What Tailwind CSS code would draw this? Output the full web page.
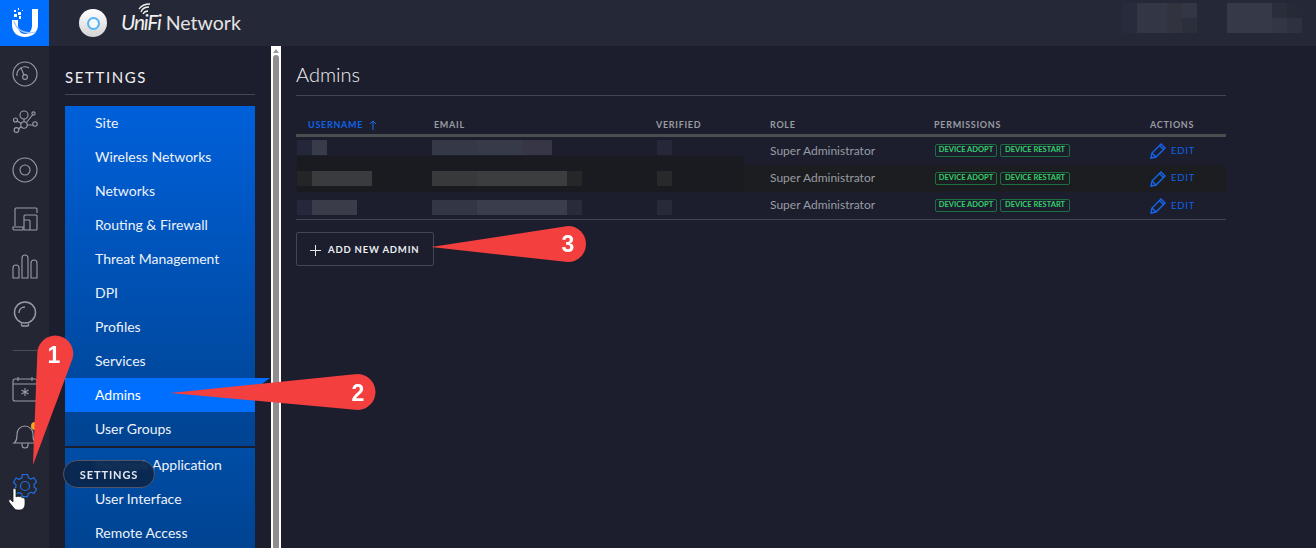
<!DOCTYPE html>
<html lang="en">
<head>
    <meta charset="UTF-8">
    <title>UniFi Network - Admins</title>
    <script src="https://cdn.jsdelivr.net/npm/@tailwindcss/browser@4"></script>
</head>
<body class="relative w-[1316px] h-[548px] overflow-hidden bg-[#1c1e2e] font-['Lato',sans-serif] text-white">

    <!-- top bar -->
    <header class="flex h-[46px] bg-[#252836]">
        <div class="w-[49px] h-[46px] bg-[#006fff] flex items-center justify-center">
            <svg width="28" height="30" viewBox="0 0 28 30" fill="none">
                <path d="M21 1h6v16c0 7-5 12-13 12S1 24 1 17v-5h6v5c0 6 3 9 7 9s7-3 7-9z" fill="#fff"/>
                <path d="M3 13c2 8 9 14 22 11" stroke="#9cc6ff" stroke-width="1.2"/>
                <path d="M3 2h2v2H3zM7 0h1v2H7zM7 4h3v3H7zM3 6h3v3H3zM8 8h2v3H8zM11 2h1v1h-1z" fill="#fff"/>
            </svg>
        </div>
        <div class="flex items-center pl-[30px]">
            <div class="w-[28px] h-[28px] rounded-full bg-linear-to-b from-white to-[#d4d4d4] flex items-center justify-center">
                <div class="w-[13px] h-[13px] rounded-full border-2 border-[#55b4f5] bg-[#f4f8fb]"></div>
            </div>
            <div class="relative ml-[14px] -mt-[3px] flex items-baseline">
                <span class="italic text-[21px] tracking-[-1.200px] text-[#f0f0f0]">UniFi</span>
                <span class="ml-[5px] text-[19.500px] text-[#e4e4e4]">Network</span>
                <svg class="absolute left-[15px] top-[-3px]" width="22" height="14" viewBox="0 0 22 14" fill="none" stroke="#f0f0f0" stroke-width="1.3">
                    <path d="M5 9c1-3 4-5 8-5M7 11c1-2 3-3 5-3M3 6c2-3 6-5 11-5"/>
                </svg>
            </div>
        </div>
        <div class="ml-auto flex pt-[3px] pr-[14px]">
            <div class="flex h-[30px] w-[75px]">
                <div class="w-[15px] h-[30px] bg-[#272b3c]"></div>
                <div class="w-[30px] h-[30px] bg-[#333644]"></div>
                <div class="w-[15px] h-[30px] bg-[#31343f]"></div>
                <div class="flex flex-col w-[15px]">
                    <div class="h-[15px] bg-[#333644]"></div>
                    <div class="h-[15px] bg-[#2b2e3b]"></div>
                </div>
            </div>
            <div class="flex h-[30px] w-[75px] ml-[30px]">
                <div class="w-[45px] h-[30px] bg-[#363947]"></div>
                <div class="flex flex-col w-[15px]">
                    <div class="h-[15px] bg-[#2a2d3a]"></div>
                    <div class="h-[15px] bg-[#333644]"></div>
                </div>
                <div class="flex flex-col w-[15px]">
                    <div class="h-[15px] bg-[#262936]"></div>
                    <div class="h-[15px] bg-[#2e3140]"></div>
                </div>
            </div>
        </div>
    </header>

    <div class="flex h-[502px]">
        <!-- icon rail -->
        <nav class="w-[49px] shrink-0 bg-[#242733] flex flex-col items-center text-[#9a9da5]">
            <div class="flex flex-col gap-[22px] pt-[15px]">
                <svg width="26" height="26" viewBox="0 0 26 26" fill="none" stroke="currentColor" stroke-width="1.1">
                    <circle cx="13" cy="13" r="12"/>
                    <circle cx="13" cy="16" r="2.4"/>
                    <path d="M12 14 9 7M5 15a8 8 0 0 1 12-8"/>
                </svg>
                <svg width="26" height="26" viewBox="0 0 26 26" fill="none" stroke="currentColor" stroke-width="1.1">
                    <circle cx="12" cy="6" r="4"/>
                    <circle cx="12" cy="16" r="3.2"/>
                    <circle cx="3.5" cy="11" r="2"/>
                    <circle cx="4.5" cy="21" r="2.4"/>
                    <circle cx="23" cy="15" r="2.2"/>
                    <circle cx="21.5" cy="4.5" r="1.6"/>
                    <path d="M12 10v3M5 12l4.500 2.500M6.500 20l3-2.500M15 16h6M14.500 13.500l6-7.500"/>
                </svg>
                <svg width="26" height="26" viewBox="0 0 26 26" fill="none" stroke="currentColor" stroke-width="1.1">
                    <circle cx="13" cy="13" r="12"/>
                    <circle cx="13" cy="13" r="5"/>
                </svg>
                <svg width="26" height="26" viewBox="0 0 26 26" fill="none" stroke="currentColor" stroke-width="1.1">
                    <path d="M3 21V4a1 1 0 0 1 1-1h20a1 1 0 0 1 1 1v4"/>
                    <path d="M1 22h10v3H2a1 1 0 0 1-1-1z"/>
                    <rect x="12" y="10" width="13" height="15" rx="1"/>
                    <path d="M12 15h5a1 1 0 0 1 1 1v9"/>
                </svg>
                <svg width="26" height="26" viewBox="0 0 26 26" fill="none" stroke="currentColor" stroke-width="1.1">
                    <path d="M1 25V15a3 3 0 0 1 6 0v10z"/>
                    <path d="M10 25V5a3 3 0 0 1 6 0v20z"/>
                    <path d="M19 25V10a3 3 0 0 1 6 0v15z"/>
                </svg>
                <svg width="26" height="26" viewBox="0 0 26 26" fill="none" stroke="currentColor" stroke-width="1.4">
                    <circle cx="13" cy="11.500" r="10.500"/>
                    <path d="M7 12c0-4 3-6 6-6M9.500 22.500v1.500a1 1 0 0 0 1 1h5a1 1 0 0 0 1-1v-1.500"/>
                </svg>
            </div>
            <div class="mt-[23px] w-[24px] h-px bg-[#4a4d58]"></div>
            <div class="mt-[25px] flex flex-col items-center">
                <svg width="26" height="26" viewBox="0 0 26 26" fill="none" stroke="currentColor" stroke-width="1.1">
                    <rect x="1" y="3" width="24" height="22" rx="2"/>
                    <path d="M1 8h24M6 1v4M20 1v4"/>
                    <path d="M13 12v8M9.500 14l7 4M16.500 14l-7 4"/>
                </svg>
                <div class="relative mt-[21px] w-[26px] h-[26px]">
                    <svg width="26" height="26" viewBox="0 0 26 26" fill="none" stroke="currentColor" stroke-width="1.1">
                        <path d="M2 20c3-2 3-5 3-9a8 8 0 0 1 16 0c0 4 0 7 3 9zM10 20v2a3 3 0 0 0 6 0v-2"/>
                    </svg>
                    <div class="absolute right-[-1px] top-[-1px] w-[8px] h-[8px] rounded-full bg-[#f5a623]"></div>
                </div>
                <svg class="mt-[24px] text-[#1e6fe0]" width="26" height="26" viewBox="0 0 26 26" fill="none" stroke="currentColor" stroke-width="1.2">
                    <circle cx="13" cy="13" r="4.500"/>
                    <path d="M10.500 1.500h5l.8 3.200 2.700 1.300 3-1.300 2.500 4.300-2.400 2.200v2.700l2.400 2.200-2.500 4.300-3-1.100-2.700 1.300-.8 3.100h-5l-.8-3.100L7 19.600l-3 1.100-2.500-4.300 2.400-2.200v-2.700L1.500 9.300 4 5l3 1.300 2.700-1.300z"/>
                </svg>
            </div>
        </nav>

        <!-- settings sidebar -->
        <aside class="w-[222px] shrink-0 pl-[16px]">
            <h2 class="h-[49px] pt-[22px] text-[15px] leading-[18px] tracking-[1.6px] text-[#f0f0f0] w-[190px] border-b border-[#43465a]">SETTINGS</h2>
            <div class="mt-[11px] w-[190px] text-[14px] text-[#eef2f8]">
                <ul class="bg-linear-to-b from-[#0060da] to-[#004391]">
                    <li class="h-[34px] pl-[30px] leading-[34px]">Site</li>
                    <li class="h-[34px] pl-[30px] leading-[34px]">Wireless Networks</li>
                    <li class="h-[34px] pl-[30px] leading-[34px]">Networks</li>
                    <li class="h-[34px] pl-[30px] leading-[34px]">Routing &amp; Firewall</li>
                    <li class="h-[34px] pl-[30px] leading-[34px]">Threat Management</li>
                    <li class="h-[34px] pl-[30px] leading-[34px]">DPI</li>
                    <li class="h-[34px] pl-[30px] leading-[34px]">Profiles</li>
                    <li class="h-[34px] pl-[30px] leading-[34px]">Services</li>
                    <li class="h-[34px] pl-[30px] leading-[34px] bg-[#006fff] text-white">Admins</li>
                    <li class="h-[34px] pl-[30px] leading-[34px]">User Groups</li>
                </ul>
                <ul class="mt-[2px] bg-linear-to-b from-[#004da6] to-[#004391]">
                    <li class="h-[34px] pl-[30px] leading-[34px]">Network Application</li>
                    <li class="h-[34px] pl-[30px] leading-[34px]">User Interface</li>
                    <li class="h-[34px] pl-[30px] leading-[34px]">Remote Access</li>
                </ul>
            </div>
        </aside>

        <!-- scrollbar -->
        <div class="w-[10px] shrink-0 bg-white px-[2px] pt-[3px]">
            <div class="w-0 h-0 mx-auto border-x-[3px] border-x-transparent border-b-[4px] border-b-[#9a9a9a]"></div>
            <div class="mt-[2px] h-[500px] bg-[#8f8d8d] rounded-t-[3px]"></div>
        </div>

        <!-- admins panel -->
        <main class="w-[945px] pl-[15px] pr-[0px]">
            <h1 class="h-[50px] pt-[16px] text-[20px] leading-[24px] font-light text-[#f2f2f2] border-b border-[#43465a]">Admins</h1>
            <div class="relative mt-[20px]">
                <div class="grid grid-cols-[138px_222px_114px_164px_216px_76px] h-[18px] items-center text-[9px] font-bold tracking-[0.7px] text-[#989ba2] border-b-[3px] border-[#494e50] box-content">
                    <div class="pl-[12px] text-[#0f62e6] flex items-center">USERNAME
                        <svg class="ml-[6px]" width="8" height="10" viewBox="0 0 8 10" fill="none" stroke="#1a6cf0"><path d="M4 10V1M1 4l3-3 3 3"/></svg>
                    </div>
                    <div>EMAIL</div>
                    <div>VERIFIED</div>
                    <div>ROLE</div>
                    <div>PERMISSIONS</div>
                    <div>ACTIONS</div>
                </div>

                <!-- row 1 -->
                <div class="relative grid grid-cols-[138px_222px_114px_164px_216px_76px] h-[28px] items-center text-[12px] text-[#999ca3]">
                    <div class="flex pl-[1px] -mt-[7px]">
                        <div class="w-[15px] h-[15px] bg-[#24263a]"></div>
                        <div class="w-[15px] h-[15px] bg-[#383b49]"></div>
                    </div>
                    <div class="flex -ml-[2px] -mt-[7px]">
                        <div class="w-[45px] h-[15px] bg-[#353846]"></div>
                        <div class="w-[45px] h-[15px] bg-[#373a49]"></div>
                        <div class="w-[30px] h-[15px] bg-[#363646]"></div>
                    </div>
                    <div class="pl-[1px] -mt-[7px]"><div class="w-[15px] h-[15px] bg-[#26283a]"></div></div>
                    <div>Super Administrator</div>
                    <div class="flex gap-[3px] pl-[1px] -mt-[2px]">
                        <span class="h-[13px] w-[62px] rounded-[2px] border border-[#1d6f41] text-center text-[7.500px] leading-[10px] font-bold text-[#35d06c]">DEVICE ADOPT</span>
                        <span class="h-[13px] w-[70px] rounded-[2px] border border-[#1d6f41] text-center text-[7.500px] leading-[10px] font-bold text-[#35d06c]">DEVICE RESTART</span>
                    </div>
                    <div class="flex items-center">
                        <svg width="16" height="16" viewBox="0 0 16 16" fill="none" stroke="#1466ee" stroke-width="1.4"><path d="M1 15l1-5L11 1l4 4-9 9zM2 10l4 4M9.500 2.500l4 4"/></svg>
                        <span class="ml-[5px] text-[9.500px] tracking-[0.8px] text-[#0f62e6]">EDIT</span>
                    </div>
                </div>

                <!-- row 2 -->
                <div class="relative grid grid-cols-[138px_222px_114px_164px_216px_76px] h-[27px] items-center text-[12px] text-[#999ca3] bg-[#1c1d20]">
                    <div class="absolute left-[1px] top-[-9px] w-[447px] h-[36px] bg-[#1a1b21]"></div>
                    <div class="relative flex pl-[1px]">
                        <div class="w-[15px] h-[15px] bg-[#242527]"></div>
                        <div class="w-[60px] h-[15px] bg-[#3a3b3e]"></div>
                    </div>
                    <div class="relative flex -ml-[2px]">
                        <div class="w-[45px] h-[15px] bg-[#38393b]"></div>
                        <div class="w-[90px] h-[15px] bg-[#3b3d3f]"></div>
                        <div class="w-[15px] h-[15px] bg-[#262729]"></div>
                    </div>
                    <div class="relative pl-[1px]"><div class="w-[15px] h-[15px] bg-[#28292b]"></div></div>
                    <div class="-mt-[2px]">Super Administrator</div>
                    <div class="flex gap-[3px] pl-[1px]">
                        <span class="h-[13px] w-[62px] rounded-[2px] border border-[#1d6f41] text-center text-[7.500px] leading-[10px] font-bold text-[#35d06c]">DEVICE ADOPT</span>
                        <span class="h-[13px] w-[70px] rounded-[2px] border border-[#1d6f41] text-center text-[7.500px] leading-[10px] font-bold text-[#35d06c]">DEVICE RESTART</span>
                    </div>
                    <div class="flex items-center">
                        <svg width="16" height="16" viewBox="0 0 16 16" fill="none" stroke="#1466ee" stroke-width="1.4"><path d="M1 15l1-5L11 1l4 4-9 9zM2 10l4 4M9.500 2.500l4 4"/></svg>
                        <span class="ml-[5px] text-[9.500px] tracking-[0.8px] text-[#0f62e6]">EDIT</span>
                    </div>
                </div>

                <!-- row 3 -->
                <div class="grid grid-cols-[138px_222px_114px_164px_216px_76px] h-[28px] items-center text-[12px] text-[#999ca3] border-b border-[#43465a]">
                    <div class="flex pl-[1px] mt-[3px]">
                        <div class="w-[15px] h-[15px] bg-[#25273a]"></div>
                        <div class="w-[45px] h-[15px] bg-[#3a3c4a]"></div>
                    </div>
                    <div class="flex -ml-[2px] mt-[3px]">
                        <div class="w-[45px] h-[15px] bg-[#333745]"></div>
                        <div class="w-[90px] h-[15px] bg-[#3a3d4b]"></div>
                        <div class="w-[15px] h-[15px] bg-[#292b3b]"></div>
                    </div>
                    <div class="pl-[1px] mt-[3px]"><div class="w-[15px] h-[15px] bg-[#282a39]"></div></div>
                    <div class="-mt-[2px]">Super Administrator</div>
                    <div class="flex gap-[3px] pl-[1px]">
                        <span class="h-[13px] w-[62px] rounded-[2px] border border-[#1d6f41] text-center text-[7.500px] leading-[10px] font-bold text-[#35d06c]">DEVICE ADOPT</span>
                        <span class="h-[13px] w-[70px] rounded-[2px] border border-[#1d6f41] text-center text-[7.500px] leading-[10px] font-bold text-[#35d06c]">DEVICE RESTART</span>
                    </div>
                    <div class="flex items-center mt-[1px]">
                        <svg width="16" height="16" viewBox="0 0 16 16" fill="none" stroke="#1466ee" stroke-width="1.4"><path d="M1 15l1-5L11 1l4 4-9 9zM2 10l4 4M9.500 2.500l4 4"/></svg>
                        <span class="ml-[5px] text-[9.500px] tracking-[0.8px] text-[#0f62e6]">EDIT</span>
                    </div>
                </div>

                <button class="mt-[12px] flex items-center w-[138px] h-[34px] pl-[13px] pt-[2px] rounded-[2px] border border-[#43465a] text-[9.500px] font-bold tracking-[0.8px] text-[#eceef2]">
                    <svg class="mr-[7px]" width="11" height="11" viewBox="0 0 11 11" stroke="#e8e8e8" stroke-width="1"><path d="M5.500 0v11M0 5.500h11"/></svg>
                    ADD NEW ADMIN
                </button>
            </div>
        </main>
    </div>

    <!-- tooltip -->
    <div class="absolute left-[63px] top-[460px] w-[92px] h-[28px] rounded-full border border-[#50566a] bg-[#0a2549]/90 backdrop-blur-[2px] text-center text-[11px] leading-[27px] font-bold tracking-[0.9px] text-[#e4e8ee]">SETTINGS</div>

    <!-- annotation arrows -->
    <svg class="absolute left-0 top-0 pointer-events-none" width="1316" height="548" viewBox="0 0 1316 548">
        <polygon points="255,378 270,378 262,384 255,385" fill="#006fff"/>
        <path d="M33 465 L37.400 351.500 A18 18 0 1 1 72.600 358.500 Z" fill="#f43f3f"/>
        <path d="M170 393 L357 374 A18 18 0 1 1 358 410 Z" fill="#f43f3f"/>
        <path d="M431 247 L568 226 A18 18 0 1 1 568 262 Z" fill="#f43f3f"/>
        <g fill="#fff" font-family="Liberation Sans" font-weight="700" font-size="23" text-anchor="middle">
            <text x="54" y="363">1</text>
            <text x="358" y="401">2</text>
            <text x="568" y="252">3</text>
        </g>
        <!-- hand cursor -->
        <path d="M13 490c0-2 3-2 3 0v7c1-1 3-1 3 0 1-1 3-1 3 1 1-1 3 0 3 2v4c0 3-2 6-5 6h-3c-2 0-3-2-4-3l-4-5c-1-2 1-3 2-2l2 2z" fill="#fff" stroke="#111" stroke-width="0.7"/>
    </svg>

</body>
</html>
